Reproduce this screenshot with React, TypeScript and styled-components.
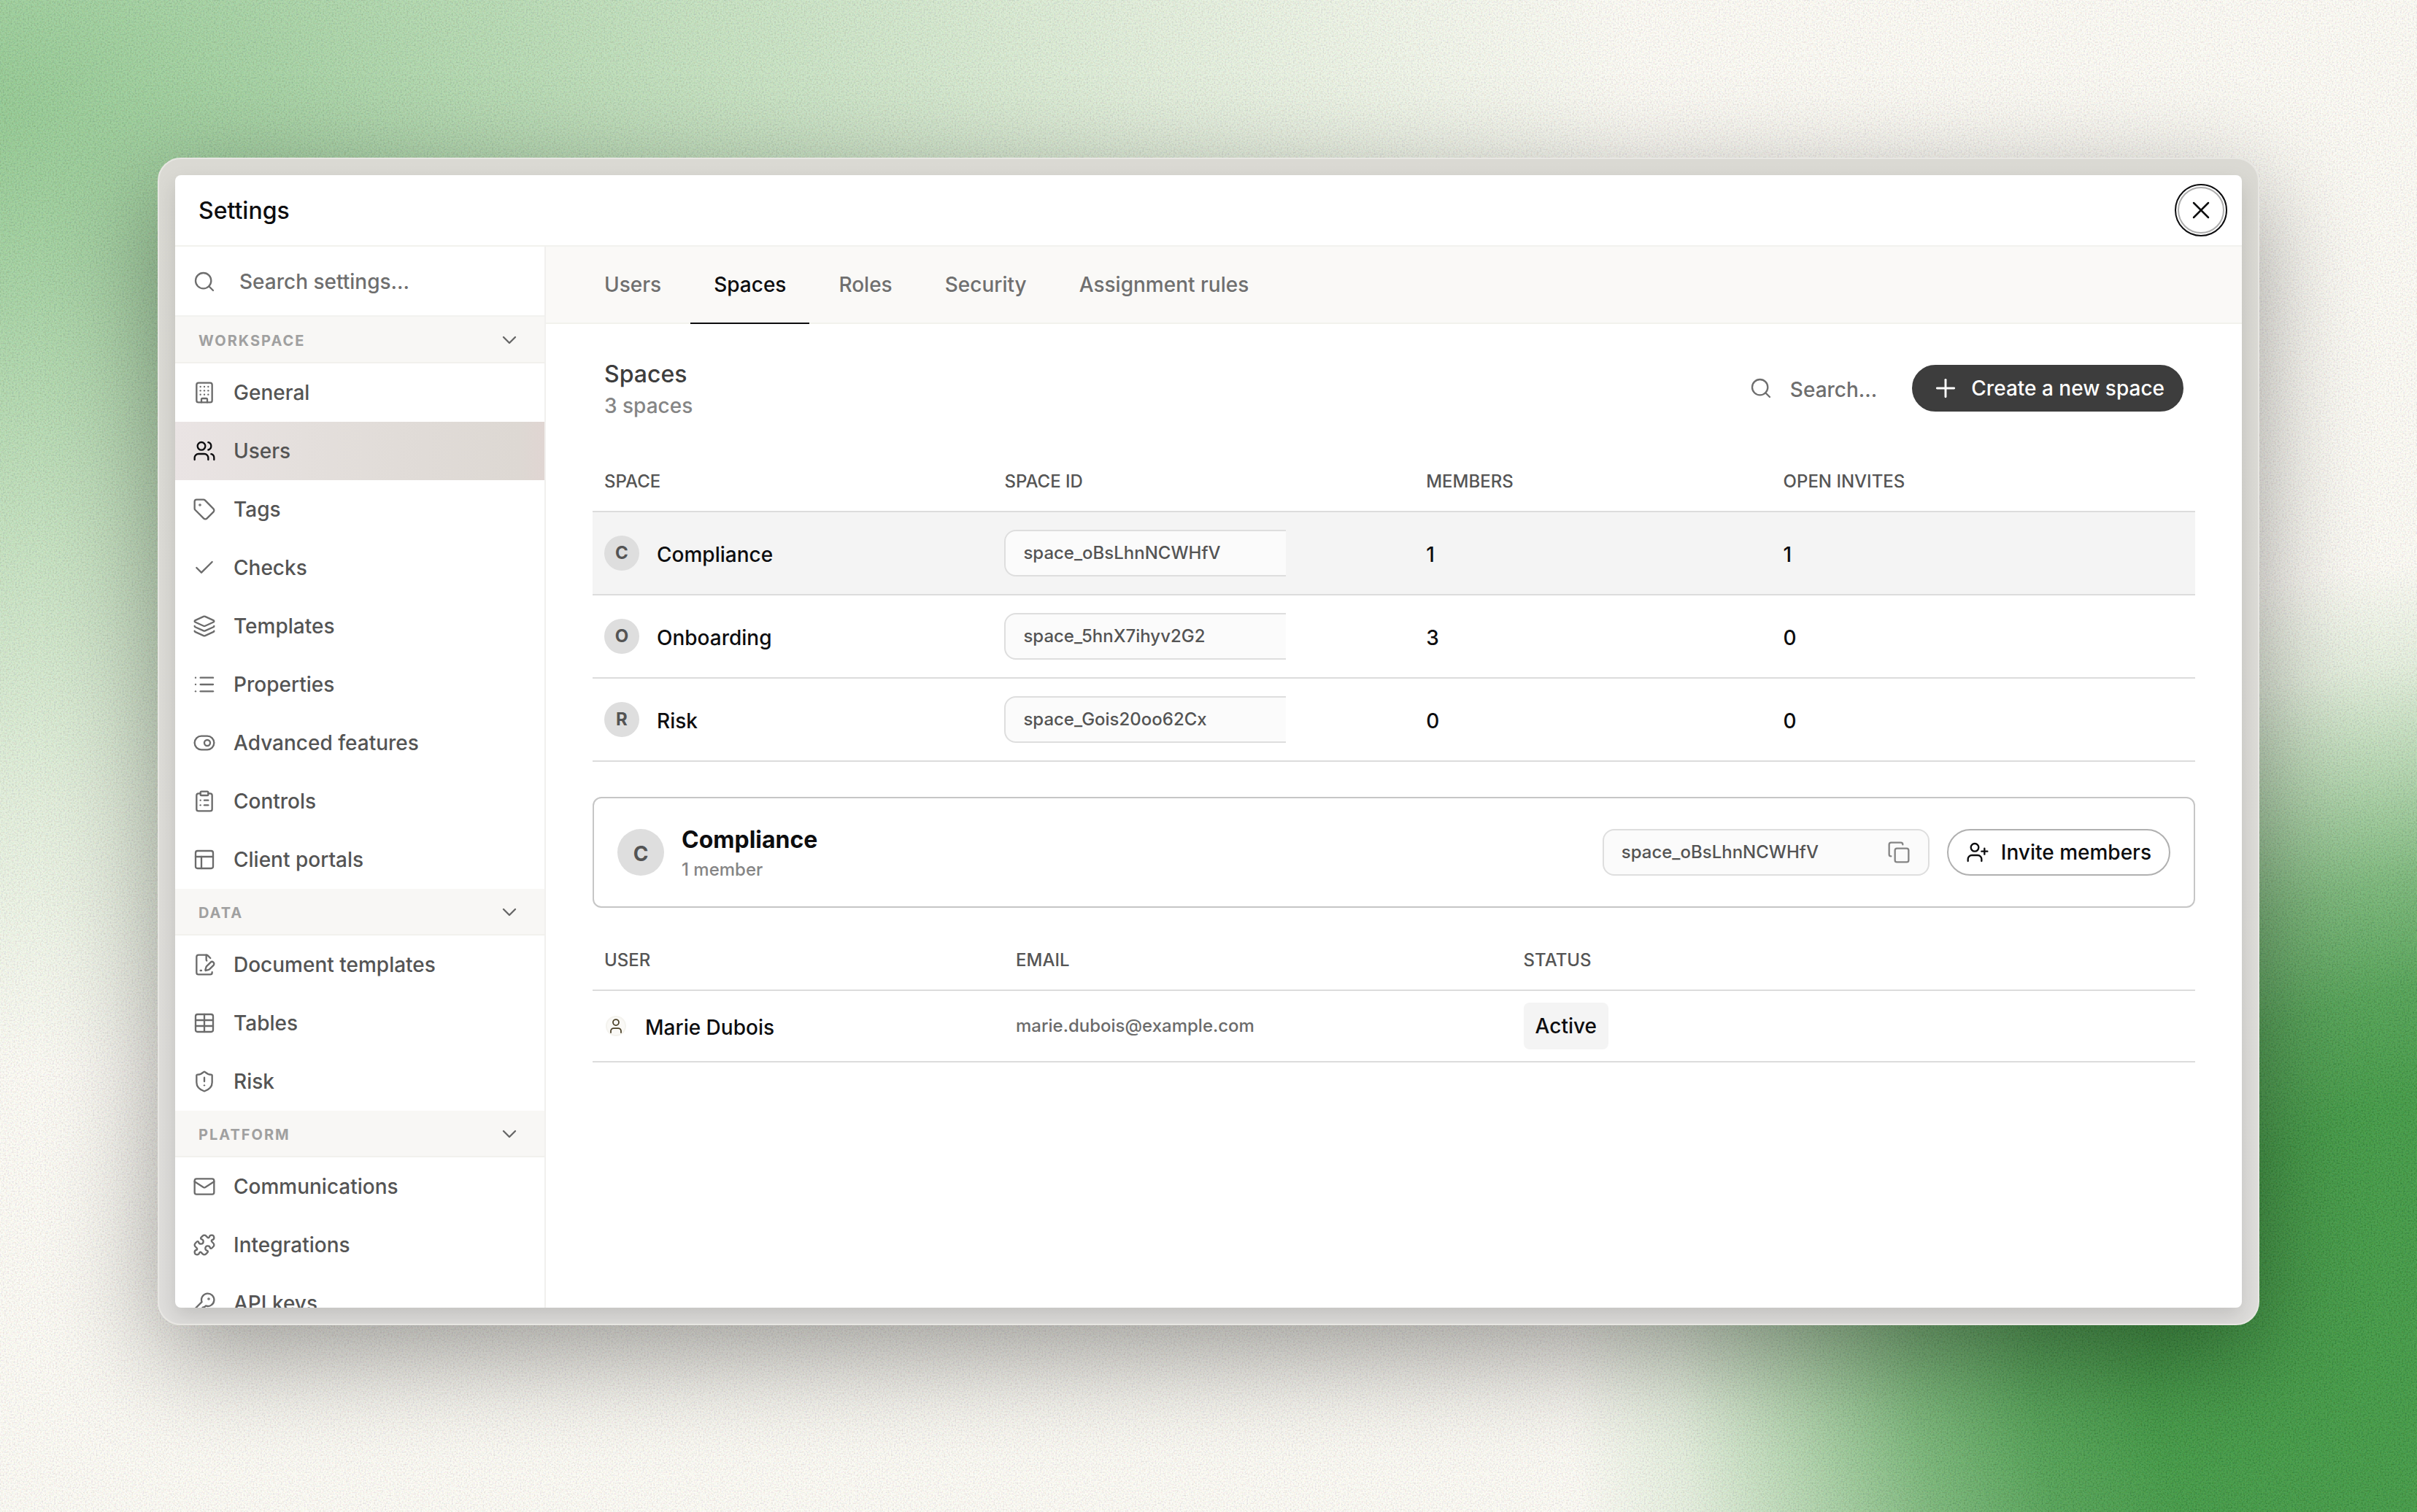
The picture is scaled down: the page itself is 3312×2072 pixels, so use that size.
import React from "react";
import styled, { createGlobalStyle, css } from "styled-components";
import {
  Building,
  Check,
  ChevronDown,
  ClipboardList,
  Copy,
  KeyRound,
  Layers,
  List,
  Mail,
  PanelsTopLeft,
  Plus,
  Puzzle,
  Search,
  ShieldAlert,
  Table,
  Tag,
  ToggleRight,
  User,
  UserPlus,
  Users,
  X,
} from "lucide-react";

const GlobalStyle = createGlobalStyle`
  *, *::before, *::after { box-sizing: border-box; }
  html, body { margin: 0; padding: 0; }
  body {
    font-family: Inter, "Liberation Sans", sans-serif;
    font-weight: 500;
    font-size: 28px;
    color: #0d0d0f;
    -webkit-font-smoothing: antialiased;
  }
  button { font: inherit; color: inherit; margin: 0; padding: 0; border: 0; background: none; }
`;

/* ---------- backdrop ---------- */

const Backdrop = styled.div`
  position: relative;
  isolation: isolate;
  width: 3312px;
  height: 2072px;
  padding: 216px;
  overflow: hidden;
  background:
    radial-gradient(
      1250px 1130px at 3400px 1900px,
      rgba(58, 149, 62, 1) 0%,
      rgba(58, 149, 62, 1) 36%,
      rgba(61, 150, 65, 0.92) 49%,
      rgba(70, 155, 72, 0.74) 62%,
      rgba(82, 162, 82, 0.45) 75%,
      rgba(100, 172, 98, 0.16) 88%,
      rgba(120, 184, 116, 0) 100%
    ),
    radial-gradient(
      2300px 1320px at -60px 150px,
      rgba(132, 194, 132, 0.92) 0%,
      rgba(138, 197, 138, 0.78) 20%,
      rgba(148, 202, 146, 0.56) 45%,
      rgba(156, 205, 152, 0.28) 72%,
      rgba(170, 212, 160, 0) 100%
    ),
    #fcfbf5;
`;

const Grain = styled.svg`
  position: absolute;
  inset: 0;
  width: 100%;
  height: 100%;
  z-index: -1;
  opacity: 0.1;
`;

const Frame = styled.div`
  width: 2880px;
  height: 1600px;
  padding: 22px;
  border: 2px solid #e7e6e2;
  border-radius: 32px;
  background: linear-gradient(180deg, #dad9d3 0%, #dddcd8 60%, #dfdedc 100%);
  box-shadow: 0 44px 140px rgba(0, 0, 0, 0.37);
  overflow: hidden;
`;

const Window = styled.div`
  display: flex;
  flex-direction: column;
  width: 100%;
  height: 100%;
  border-radius: 8px;
  background: #fff;
  overflow: hidden;
  box-shadow: 0 12px 28px rgba(0, 0, 0, 0.13);
`;

const TitleBar = styled.header`
  display: flex;
  align-items: center;
  justify-content: space-between;
  flex: none;
  height: 98px;
  padding: 0 24px 0 32px;
  border-bottom: 2px solid #f2f2ee;
  font-size: 32px;
`;

const CloseButton = styled.button`
  display: grid;
  place-items: center;
  width: 64px;
  height: 64px;
  border: 2px solid #aeaeae;
  border-radius: 50%;
  outline: 2px solid #0d0d0f;
  outline-offset: 2px;
`;

const Body = styled.div`
  display: flex;
  flex: 1;
  min-height: 0;
`;

/* ---------- sidebar ---------- */

const Sidebar = styled.nav`
  display: flex;
  flex-direction: column;
  flex: none;
  width: 508px;
  border-right: 2px solid #f1f0ee;
  overflow: hidden;
  color: #545454;
  & > * { flex: none; }
`;

const SidebarSearch = styled.label`
  display: flex;
  align-items: center;
  gap: 32px;
  height: 96px;
  padding: 0 24px;
  box-shadow: inset 0 -2px 0 #f2f2ef;
  color: #6e6e6e;
`;

const SectionHeader = styled.div`
  display: flex;
  align-items: center;
  justify-content: space-between;
  height: 64px;
  padding: 0 32px;
  background: #f8f7f5;
  box-shadow: inset 0 -2px 0 #f2f1ed;
  color: #a0a0a0;
  font-size: 20px;
  font-weight: 700;
  letter-spacing: 2px;
  span { padding-top: 2px; }
  svg { color: #666; }
`;

const NavItem = styled.a<{ $active?: boolean }>`
  display: flex;
  align-items: center;
  gap: 24px;
  height: 80px;
  padding: 0 24px;
  svg { color: #6b6b6b; }
  ${({ $active }) =>
    $active &&
    css`
      background: linear-gradient(90deg, #eae4e4 0%, #e4dfdc 35%, #ddd8d3 93%, #e0d5d2 100%);
      svg { color: #0d0d0f; }
    `}
`;

/* ---------- main area ---------- */

const Main = styled.main`
  display: flex;
  flex-direction: column;
  flex: 1;
  min-width: 0;
`;

const TabBar = styled.div`
  display: flex;
  gap: 8px;
  height: 106px;
  padding-left: 48px;
  background: #faf9f7;
  box-shadow: inset 0 -2px 0 #f2f2ed;
`;

const Tab = styled.a<{ $active?: boolean }>`
  display: flex;
  align-items: center;
  padding: 0 32px 3px;
  color: #6f6f6f;
  ${({ $active }) =>
    $active &&
    css`
      color: #0d0d0f;
      box-shadow: inset 0 -2px 0 #0d0d0f;
    `}
`;

const Content = styled.section`
  display: flex;
  flex-direction: column;
  padding: 44px 64px 0;
`;

const Heading = styled.div`
  display: flex;
  align-items: center;
  height: 88px;
  padding: 0 16px;
  margin-bottom: 40px;
`;

const Titles = styled.div`
  display: flex;
  flex-direction: column;
  flex: 1;
`;

const Title = styled.h2<{ $strong?: boolean }>`
  margin: 0;
  padding-top: 1px;
  font-size: 32px;
  line-height: 48px;
  height: 48px;
  font-weight: ${({ $strong }) => ($strong ? 700 : 500)};
  color: ${({ $strong }) => ($strong ? "#0d0d0f" : "#3d3d3d")};
`;

const Subtitle = styled.p<{ $small?: boolean }>`
  margin: 0;
  color: #858585;
  font-size: ${({ $small }) => ($small ? 24 : 28)}px;
  line-height: ${({ $small }) => ($small ? 36 : 40)}px;
`;

const TableSearch = styled.label`
  display: flex;
  align-items: center;
  gap: 24px;
  margin-right: 48px;
  color: #6e6e6e;
  span { padding-top: 3px; }
`;

const PillButton = styled.button`
  display: flex;
  align-items: center;
  gap: 16px;
  height: 64px;
  padding: 0 24px;
  border: 2px solid #b0b0b0;
  border-radius: 32px;
  white-space: nowrap;
`;

const SolidPillButton = styled(PillButton)`
  gap: 15px;
  border-color: #3d3d3d;
  background: #3d3d3d;
  color: #fff;
`;

const Grid = styled.div<{ $cols: string }>`
  display: grid;
  grid-template-columns: ${({ $cols }) => $cols};
`;

const HeadRow = styled(Grid)`
  height: 86px;
  border-bottom: 2px solid #dcdcdc;
  color: #555;
  font-size: 24px;
`;

const DataRow = styled(Grid)<{ $height: number; $selected?: boolean }>`
  height: ${({ $height }) => $height}px;
  border-bottom: 2px solid #dcdcdc;
  background: ${({ $selected }) => ($selected ? "#f4f4f4" : "transparent")};
`;

const Cell = styled.div`
  display: flex;
  align-items: center;
  gap: 24px;
  padding: 0 16px;
  min-width: 0;
`;

const HeadCell = styled(Cell)`
  padding-top: 2px;
`;

const CellText = styled.span`
  padding-top: 3px;
`;

const Email = styled.span`
  padding-bottom: 1px;
  color: #6b6b6b;
  font-size: 24px;
`;

const Avatar = styled.span<{ $large?: boolean }>`
  display: grid;
  place-items: center;
  flex: none;
  width: ${({ $large }) => ($large ? 64 : 48)}px;
  height: ${({ $large }) => ($large ? 64 : 48)}px;
  padding-top: ${({ $large }) => ($large ? 3 : 0)}px;
  padding-bottom: ${({ $large }) => ($large ? 0 : 2)}px;
  border-radius: 50%;
  background: #dedede;
  color: #545454;
  font-size: ${({ $large }) => ($large ? 28 : 24)}px;
  font-weight: 700;
`;

const PersonBadge = styled.span`
  display: grid;
  place-items: center;
  width: 28px;
  height: 28px;
  margin: 0 2px;
  border: 2px solid #f4f3ee;
  border-radius: 50%;
  background: #faf9f6;
  color: #4a4027;
`;

const IdClip = styled.div`
  width: 386px;
  overflow: hidden;
`;

const IdBox = styled.div`
  display: flex;
  align-items: center;
  justify-content: space-between;
  width: 448px;
  height: 64px;
  padding: 0 24px;
  border: 2px solid #dedede;
  border-radius: 16px;
  background: #fbfbfb;
  color: #545454;
  font-size: 24px;
  span { padding-bottom: 1px; }
  svg { color: #858585; }
`;

const Card = styled.div`
  display: flex;
  align-items: center;
  gap: 24px;
  height: 152px;
  margin: 48px 0 28px;
  padding: 0 32px;
  border: 2px solid #c6c6c6;
  border-radius: 12px;
`;

const StatusBadge = styled.span`
  display: flex;
  align-items: center;
  height: 64px;
  padding: 0 16px;
  border-radius: 8px;
  background: #f4f4f4;
`;

const DocumentPen = ({ size = 32, strokeWidth = 1.75 }: { size?: number; strokeWidth?: number }) => (
  <svg
    width={size}
    height={size}
    viewBox="0 0 24 24"
    fill="none"
    stroke="currentColor"
    strokeWidth={strokeWidth}
    strokeLinecap="round"
    strokeLinejoin="round"
  >
    <path d="M14.364 13.634a2 2 0 0 0-.506.854l-.837 2.87a.5.5 0 0 0 .62.62l2.87-.837a2 2 0 0 0 .854-.506l4.013-4.009a1 1 0 0 0-3.004-3.004z" />
    <path d="M14.487 7.858A1 1 0 0 1 14 7V2" />
    <path d="M20 19.645V20a2 2 0 0 1-2 2H6a2 2 0 0 1-2-2V4a2 2 0 0 1 2-2h8a2.4 2.4 0 0 1 1.704.706l2.516 2.516" />
    <path d="M8 18h1" />
  </svg>
);

type IconType = React.ComponentType<{ size?: number; strokeWidth?: number }>;

const sections: { label: string; items: [string, IconType][] }[] = [
  {
    label: "WORKSPACE",
    items: [
      ["General", Building],
      ["Users", Users],
      ["Tags", Tag],
      ["Checks", Check],
      ["Templates", Layers],
      ["Properties", List],
      ["Advanced features", ToggleRight],
      ["Controls", ClipboardList],
      ["Client portals", PanelsTopLeft],
    ],
  },
  {
    label: "DATA",
    items: [
      ["Document templates", DocumentPen],
      ["Tables", Table],
      ["Risk", ShieldAlert],
    ],
  },
  {
    label: "PLATFORM",
    items: [
      ["Communications", Mail],
      ["Integrations", Puzzle],
      ["API keys", KeyRound],
    ],
  },
];

const tabs = ["Users", "Spaces", "Roles", "Security", "Assignment rules"];

const spaces = [
  { name: "Compliance", id: "space_oBsLhnNCWHfV", members: 1, invites: 1 },
  { name: "Onboarding", id: "space_5hnX7ihyv2G2", members: 3, invites: 0 },
  { name: "Risk", id: "space_Gois20oo62Cx", members: 0, invites: 0 },
];

const SPACE_COLS = "548.4px 577.8px 489.4px 1fr";
const USER_COLS = "564px 695.6px 1fr";
const STROKE = 1.75;

export default function App() {
  return (
    <>
      <GlobalStyle />
      <Backdrop>
        <Grain aria-hidden="true">
          <filter id="grain" x="0" y="0" width="100%" height="100%" colorInterpolationFilters="sRGB">
            <feTurbulence type="fractalNoise" baseFrequency="0.47" numOctaves="2" seed="7" />
            <feColorMatrix type="saturate" values="0.35" />
            <feComponentTransfer>
              <feFuncR type="linear" slope="3" intercept="-0.7" />
              <feFuncG type="linear" slope="3" intercept="-0.7" />
              <feFuncB type="linear" slope="3" intercept="-0.75" />
              <feFuncA type="linear" slope="0" intercept="1" />
            </feComponentTransfer>
          </filter>
          <rect width="100%" height="100%" filter="url(#grain)" />
        </Grain>
        <Frame>
          <Window>
            <TitleBar>
              Settings
              <CloseButton aria-label="Close">
                <X size={40} strokeWidth={1.5} />
              </CloseButton>
            </TitleBar>
            <Body>
              <Sidebar>
                <SidebarSearch>
                  <Search size={32} strokeWidth={STROKE} />
                  Search settings...
                </SidebarSearch>
                {sections.map((section) => (
                  <React.Fragment key={section.label}>
                    <SectionHeader>
                      <span>{section.label}</span>
                      <ChevronDown size={32} strokeWidth={STROKE} />
                    </SectionHeader>
                    {section.items.map(([label, Icon]) => (
                      <NavItem key={label} $active={label === "Users"}>
                        <Icon size={32} strokeWidth={STROKE} />
                        {label}
                      </NavItem>
                    ))}
                  </React.Fragment>
                ))}
              </Sidebar>
              <Main>
                <TabBar>
                  {tabs.map((tab) => (
                    <Tab key={tab} $active={tab === "Spaces"}>
                      {tab}
                    </Tab>
                  ))}
                </TabBar>
                <Content>
                  <Heading>
                    <Titles>
                      <Title>Spaces</Title>
                      <Subtitle>3 spaces</Subtitle>
                    </Titles>
                    <TableSearch>
                      <Search size={32} strokeWidth={STROKE} />
                      <span>Search...</span>
                    </TableSearch>
                    <SolidPillButton>
                      <Plus size={40} strokeWidth={1.75} />
                      Create a new space
                    </SolidPillButton>
                  </Heading>

                  <HeadRow $cols={SPACE_COLS}>
                    <HeadCell>SPACE</HeadCell>
                    <HeadCell>SPACE ID</HeadCell>
                    <HeadCell>MEMBERS</HeadCell>
                    <HeadCell>OPEN INVITES</HeadCell>
                  </HeadRow>
                  {spaces.map((space, index) => (
                    <DataRow key={space.id} $cols={SPACE_COLS} $height={114} $selected={index === 0}>
                      <Cell>
                        <Avatar>{space.name[0]}</Avatar>
                        <CellText>{space.name}</CellText>
                      </Cell>
                      <Cell>
                        <IdClip>
                          <IdBox>
                            <span>{space.id}</span>
                          </IdBox>
                        </IdClip>
                      </Cell>
                      <Cell>
                        <CellText>{space.members}</CellText>
                      </Cell>
                      <Cell>
                        <CellText>{space.invites}</CellText>
                      </Cell>
                    </DataRow>
                  ))}

                  <Card>
                    <Avatar $large>C</Avatar>
                    <Titles>
                      <Title $strong>Compliance</Title>
                      <Subtitle $small>1 member</Subtitle>
                    </Titles>
                    <IdBox>
                      <span>space_oBsLhnNCWHfV</span>
                      <Copy size={32} strokeWidth={STROKE} />
                    </IdBox>
                    <PillButton>
                      <UserPlus size={32} strokeWidth={STROKE} />
                      Invite members
                    </PillButton>
                  </Card>

                  <HeadRow $cols={USER_COLS}>
                    <HeadCell>USER</HeadCell>
                    <HeadCell>EMAIL</HeadCell>
                    <HeadCell>STATUS</HeadCell>
                  </HeadRow>
                  <DataRow $cols={USER_COLS} $height={98}>
                    <Cell>
                      <PersonBadge>
                        <User size={24} strokeWidth={STROKE} />
                      </PersonBadge>
                      <CellText>Marie Dubois</CellText>
                    </Cell>
                    <Cell>
                      <Email>marie.dubois@example.com</Email>
                    </Cell>
                    <Cell>
                      <StatusBadge>Active</StatusBadge>
                    </Cell>
                  </DataRow>
                </Content>
              </Main>
            </Body>
          </Window>
        </Frame>
      </Backdrop>
    </>
  );
}
